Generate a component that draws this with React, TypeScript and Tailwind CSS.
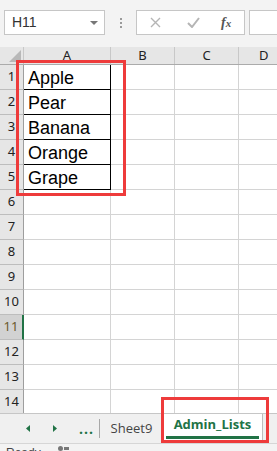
const rows = [1, 2, 3, 4, 5, 6, 7, 8, 9, 10, 11, 12, 13, 14];
const fruits: Record<number, string> = { 1: "Apple", 2: "Pear", 3: "Banana", 4: "Orange", 5: "Grape" };

export default function App() {
  return (
    <div className="relative w-[277px] h-[451px] overflow-hidden bg-white" style={{ fontFamily: '"Liberation Sans", Arial, sans-serif' }}>
      {/* formula bar */}
      <div className="h-[47px] bg-[#f3f3f3] flex items-start pt-[10px] pl-[4px]">
        <div className="w-[101px] h-[25px] bg-white border border-[#c6c6c6] flex items-center justify-between pl-[7px] pr-[6px]">
          <span className="text-[14px] text-[#333]">H11</span>
          <svg width="8" height="4" viewBox="0 0 8 4">
            <path d="M0 0 L8 0 L4 4 Z" fill="#777" />
          </svg>
        </div>
        <div className="w-[31px] h-[25px] flex flex-col items-center justify-center gap-[2px]">
          <span className="w-[2px] h-[2px] bg-[#9a9a9a]" />
          <span className="w-[2px] h-[2px] bg-[#9a9a9a]" />
          <span className="w-[2px] h-[2px] bg-[#9a9a9a]" />
        </div>
        <div className="w-[109px] h-[25px] bg-white border border-[#c6c6c6] flex items-center">
          <svg className="ml-[13px]" width="11" height="11" viewBox="0 0 11 11">
            <path d="M1 1 L10 10 M10 1 L1 10" stroke="#b5b5b5" strokeWidth="1.4" />
          </svg>
          <svg className="ml-[26px]" width="13" height="11" viewBox="0 0 13 11">
            <path d="M1 6 L5 10 L12 1" stroke="#b5b5b5" strokeWidth="2" fill="none" />
          </svg>
          <span className="ml-[21px] text-[14px] italic font-bold text-[#555]" style={{ fontFamily: '"Liberation Serif", serif' }}>
            f<span className="text-[11px]">x</span>
          </span>
        </div>
        <div className="ml-[4px] flex-1 h-[25px] bg-white border border-[#c6c6c6] border-r-0" />
      </div>

      {/* column headers */}
      <div className="flex h-[18px] bg-[#e6e6e6] border-b border-[#ababab] text-[13px] text-[#222]" style={{ fontFamily: '"Noto Sans", sans-serif' }}>
        <div className="w-[24px] shrink-0 border-r border-[#c8c8c8] relative">
          <svg className="absolute left-[9px] top-[3px]" width="12" height="12" viewBox="0 0 12 12">
            <path d="M12 0 L12 12 L0 12 Z" fill="#b8b8b8" />
          </svg>
        </div>
        <div className="w-[87px] shrink-0 border-r border-[#c8c8c8] flex items-center justify-center leading-none">A</div>
        <div className="w-[64px] shrink-0 border-r border-[#c8c8c8] flex items-center justify-center leading-none">B</div>
        <div className="w-[64px] shrink-0 border-r border-[#c8c8c8] flex items-center justify-center leading-none">C</div>
        <div className="flex-1 flex items-center pl-[20px] leading-none">D</div>
      </div>

      {/* rows */}
      {rows.map((r) => {
        const selected = r === 11;
        const fruit = fruits[r];
        return (
          <div key={r} className="flex h-[25px]">
            <div
              className={
                selected
                  ? "w-[24px] shrink-0 bg-[#d2d2d2] border-b border-[#bdbdbd] border-r-2 border-r-[#217346] flex items-center justify-center text-[13px] text-[#6b5a2c]"
                  : "w-[24px] shrink-0 bg-[#e6e6e6] border-b border-[#bdbdbd] border-r border-r-[#9e9e9e] flex items-center justify-center text-[13px] text-[#222]"
              }
              style={{ fontFamily: '"Noto Sans", sans-serif' }}
            >
              {r}
            </div>
            <div
              className={
                fruit
                  ? "w-[87px] shrink-0 border-b border-r border-black flex items-center pl-[4px] pt-[2px] text-[18px] text-black"
                  : "w-[87px] shrink-0 border-b border-r border-[#d4d4d4]"
              }
            >
              {fruit}
            </div>
            <div className="w-[64px] shrink-0 border-b border-r border-[#d4d4d4]" />
            <div className="w-[64px] shrink-0 border-b border-r border-[#d4d4d4]" />
            <div className="flex-1 border-b border-[#d4d4d4]" />
          </div>
        );
      })}

      {/* sheet tabs */}
      <div className="absolute left-0 right-0 top-[413px] h-[30px] bg-[#f0f0f0] border-t border-[#c6c6c6] flex items-stretch" style={{ fontFamily: '"Open Sans", sans-serif' }}>
        <div className="w-[99px] flex items-center">
          <svg className="ml-[26px]" width="4" height="7" viewBox="0 0 4 7">
            <path d="M4 0 L4 7 L0 3.5 Z" fill="#217346" />
          </svg>
          <svg className="ml-[23px]" width="4" height="7" viewBox="0 0 4 7">
            <path d="M0 0 L0 7 L4 3.5 Z" fill="#217346" />
          </svg>
          <span className="ml-[22px] text-[14px] font-bold text-[#217346] leading-none tracking-[1px]">...</span>
        </div>
        <div className="w-px bg-[#a8a8a8] my-[5px]" />
        <div className="w-[63px] flex items-center justify-center text-[13px] text-[#444]">Sheet9</div>
        <div className="w-[100px] bg-white border-r border-[#bdbdbd] flex flex-col">
          <div className="flex-1 flex items-center justify-center text-[13px] font-bold text-[#217346]">Admin_Lists</div>
          <div className="h-[3px] bg-[#217346] mx-[3px] mb-[4px]" />
        </div>
      </div>

      {/* status bar */}
      <div className="absolute left-0 right-0 top-[443px] h-[8px] bg-[#f3f3f3] border-t border-[#d6d6d6] overflow-hidden">
        <span className="absolute left-[6px] top-[3px] text-[12px] text-[#444] leading-none">Ready</span>
        <span className="absolute left-[58px] top-[2px] w-[5px] h-[5px] rounded-full bg-[#777]" />
        <span className="absolute left-[64px] top-[3px] w-[5px] h-[3px] bg-[#777]" />
      </div>

      {/* annotation boxes */}
      <div className="absolute left-[16px] top-[60px] w-[110px] h-[136px] border-[3px] border-[#ee3b3b]" />
      <div className="absolute left-[161px] top-[397px] w-[108px] h-[46px] border-[3px] border-[#ee3b3b]" />
    </div>
  );
}
